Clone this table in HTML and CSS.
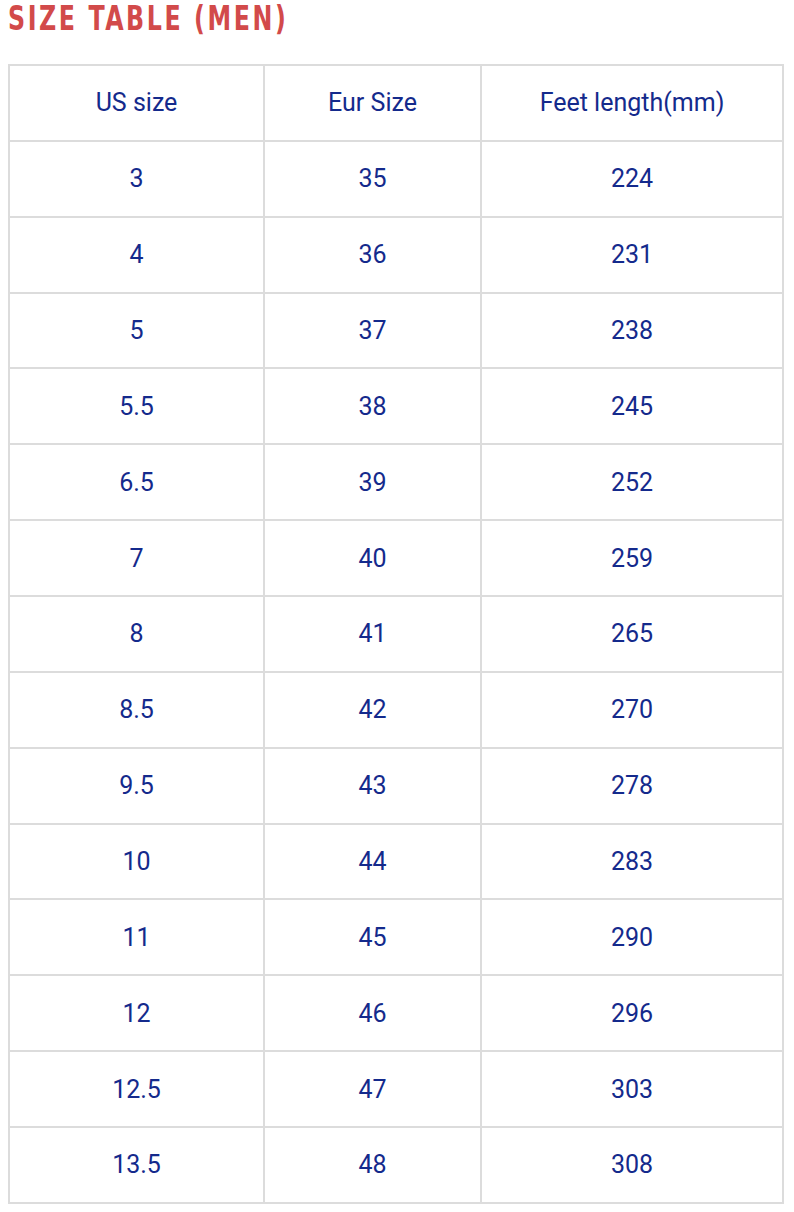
FILE: index.html
```html
<!DOCTYPE html>
<html>
<head>
<meta charset="utf-8">
<link rel="stylesheet" href="styles.css">
</head>
<body>
<h1 class="title">SIZE TABLE (MEN)</h1>
<table class="sizes">
<thead>
<tr><th>US size</th><th>Eur Size</th><th>Feet length(mm)</th></tr>
</thead>
<tbody>
<tr><td>3</td><td>35</td><td>224</td></tr>
<tr><td>4</td><td>36</td><td>231</td></tr>
<tr><td>5</td><td>37</td><td>238</td></tr>
<tr><td>5.5</td><td>38</td><td>245</td></tr>
<tr><td>6.5</td><td>39</td><td>252</td></tr>
<tr><td>7</td><td>40</td><td>259</td></tr>
<tr><td>8</td><td>41</td><td>265</td></tr>
<tr><td>8.5</td><td>42</td><td>270</td></tr>
<tr><td>9.5</td><td>43</td><td>278</td></tr>
<tr><td>10</td><td>44</td><td>283</td></tr>
<tr><td>11</td><td>45</td><td>290</td></tr>
<tr><td>12</td><td>46</td><td>296</td></tr>
<tr><td>12.5</td><td>47</td><td>303</td></tr>
<tr><td>13.5</td><td>48</td><td>308</td></tr>
</tbody>
</table>
</body>
</html>
```
FILE: styles.css
```css
html, body {
  margin: 0;
  padding: 0;
  background: #ffffff;
}
body {
  padding: 0 0 0 8px;
}
.title {
  margin: 0;
  width: max-content;
  height: 64px;
  box-sizing: border-box;
  font-family: "DejaVu Sans", sans-serif;
  font-stretch: condensed;
  font-weight: bold;
  font-size: 33px;
  line-height: 38px;
  letter-spacing: 3.2px;
  color: #d24a4a;
  transform: scaleX(0.8);
  transform-origin: left top;
  white-space: nowrap;
}
.sizes {
  border-collapse: collapse;
  table-layout: fixed;
  width: 776px;
  font-family: Roboto, "Liberation Sans", sans-serif;
  font-size: 25px;
  color: #142a8c;
}
.sizes th, .sizes td {
  border: 2px solid #dcdcdc;
  height: 73.87px;
  padding: 0;
  text-align: center;
  vertical-align: middle;
  font-weight: normal;
}
.sizes th:nth-child(1) { width: 253px; }
.sizes th:nth-child(2) { width: 215px; }
```
